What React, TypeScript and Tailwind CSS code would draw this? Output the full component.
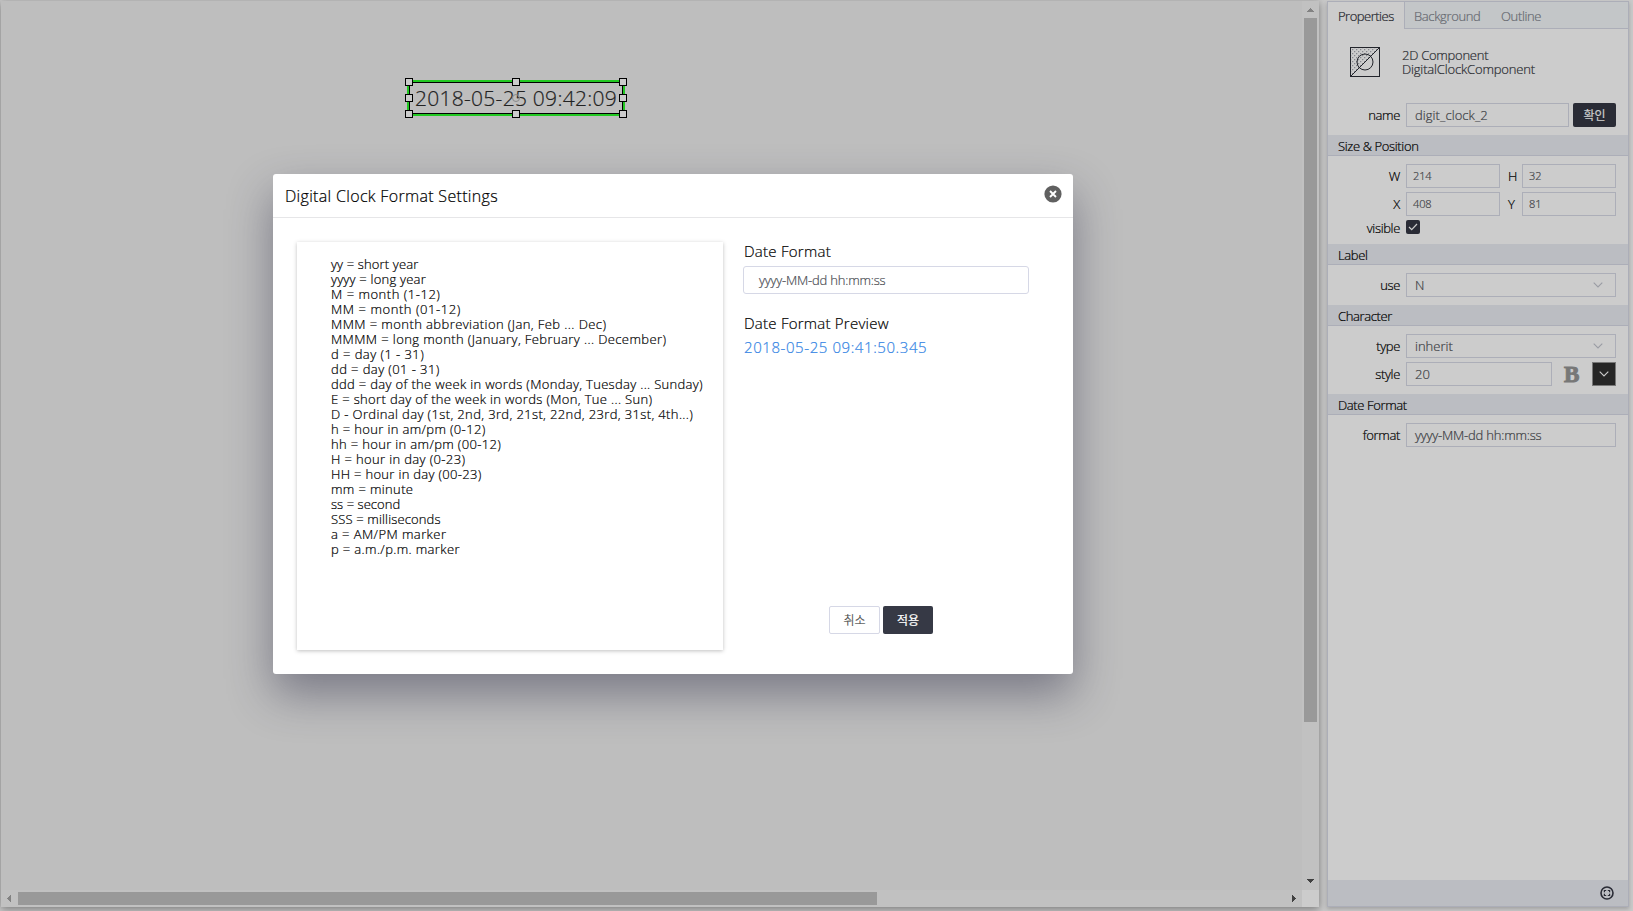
import React from "react";

const lines: { text: string; cls: string }[] = [
  { text: "yy = short year", cls: "tracking-[0.14px]" },
  { text: "yyyy = long year", cls: "tracking-[0.22px]" },
  { text: "M = month (1-12)", cls: "tracking-[0.52px]" },
  { text: "MM = month (01-12)", cls: "tracking-[0.56px]" },
  { text: "MMM = month abbreviation (Jan, Feb ... Dec)", cls: "tracking-[0.42px]" },
  { text: "MMMM = long month (January, February ... December)", cls: "tracking-[0.4px]" },
  { text: "d = day (1 - 31)", cls: "tracking-[0.44px]" },
  { text: "dd = day (01 - 31)", cls: "tracking-[0.41px]" },
  { text: "ddd = day of the week in words (Monday, Tuesday ... Sunday)", cls: "tracking-[0.32px]" },
  { text: "E = short day of the week in words (Mon, Tue ... Sun)", cls: "tracking-[0.34px]" },
  { text: "D - Ordinal day (1st, 2nd, 3rd, 21st, 22nd, 23rd, 31st, 4th...)", cls: "tracking-[0.37px]" },
  { text: "h = hour in am/pm (0-12)", cls: "tracking-[0.35px]" },
  { text: "hh = hour in am/pm (00-12)", cls: "tracking-[0.34px]" },
  { text: "H = hour in day (0-23)", cls: "tracking-[0.36px]" },
  { text: "HH = hour in day (00-23)", cls: "tracking-[0.31px]" },
  { text: "mm = minute", cls: "tracking-[0.36px]" },
  { text: "ss = second", cls: "tracking-[0.05px]" },
  { text: "SSS = milliseconds", cls: "tracking-[0.14px]" },
  { text: "a = AM/PM marker", cls: "tracking-[0.42px]" },
  { text: "p = a.m./p.m. marker", cls: "tracking-[0.36px]" },
];

function Handle({ cls }: { cls: string }) {
  return <span className={`absolute size-2 border border-black bg-[#cccccc] ${cls}`} />;
}

function Section({ children }: { children: React.ReactNode }) {
  return (
    <h3 className="mt-2 flex h-[21px] shrink-0 items-center border-b border-[#acaeb8] bg-[#bbbdc2] pt-[2px] pl-[10px] text-[13px] leading-none tracking-[-0.37px] text-black">
      {children}
    </h3>
  );
}

function Label({ children }: { children: React.ReactNode }) {
  return <span className="w-[72px] shrink-0 text-right text-[13px] leading-none tracking-[-0.35px] text-black">{children}</span>;
}

function Field({ children, cls }: { children: React.ReactNode; cls: string }) {
  return (
    <div className={`flex h-6 items-center border border-[#acaeb8] leading-none text-[#3c3e44] ${cls}`}>
      {children}
    </div>
  );
}

function Chevron({ cls }: { cls: string }) {
  return (
    <svg viewBox="0 0 10 6" className={`h-[6px] w-[10px] ${cls}`} fill="none" stroke="currentColor" strokeWidth="1.1">
      <path d="M0.7 0.7 5 5 9.3 0.7" />
    </svg>
  );
}

function Canvas() {
  return (
    <main className="mt-px ml-px flex h-[906px] w-[1318px] shrink-0 flex-col bg-[#bebebe] shadow-[0_2px_8px_rgba(0,0,0,0.4)]">
      <div className="flex h-[889px]">
        <div className="relative w-[1301px]">
          <div className="absolute top-[79px] left-[406px] flex h-9 w-[218px] items-center justify-center border-2 border-[#22c822]">
            <div className="absolute inset-0 border border-black" />
            <span className="pt-px text-[21px] leading-none tracking-[0.27px] whitespace-nowrap text-[#222]">2018-05-25 09:42:09</span>
            <span className="absolute top-3 left-[103px] size-2 rounded-full border border-[#8a8a8a]" />
            <Handle cls="-top-1 -left-1" />
            <Handle cls="-top-1 left-[103px]" />
            <Handle cls="-top-1 -right-1" />
            <Handle cls="top-3 -left-1" />
            <Handle cls="top-3 -right-1" />
            <Handle cls="-bottom-1 -left-1" />
            <Handle cls="-bottom-1 left-[103px]" />
            <Handle cls="-right-1 -bottom-1" />
          </div>
        </div>
        <div className="flex w-[17px] flex-col items-center bg-[#c1c1c1]">
          <svg viewBox="0 0 7 4" className="mt-[7px] h-1 w-[7px]" fill="#828282"><path d="M3 0h1v1h1v1h1v1h1v1H0V3h1V2h1V1h1z" /></svg>
          <div className="mt-[6px] h-[704px] w-[13px] bg-[#999999]" />
          <svg viewBox="0 0 7 4" className="mt-[157px] h-1 w-[7px]" fill="#404040"><path d="M3 4h1V3h1V2h1V1h1V0H0v1h1v1h1v1h1z" /></svg>
        </div>
      </div>
      <div className="flex h-[17px]">
        <div className="flex w-[1301px] items-center bg-[#c1c1c1]">
          <svg viewBox="0 0 4 7" className="ml-[6px] h-[7px] w-1" fill="#828282"><path d="M0 3v1h1v1h1v1h1v1h1V0H3v1H2v1H1v1z" /></svg>
          <div className="ml-[7px] h-[13px] w-[859px] bg-[#999999]" />
          <svg viewBox="0 0 4 7" className="ml-[415px] h-[7px] w-1" fill="#404040"><path d="M4 3v1H3v1H2v1H1v1H0V0h1v1h1v1h1v1z" /></svg>
        </div>
        <div className="w-[17px] bg-[#cccccc]" />
      </div>
    </main>
  );
}

function Panel() {
  return (
    <aside className="mt-px ml-2 flex h-[906px] w-[302px] shrink-0 flex-col border border-[#acaeb8] bg-[#cccccc] shadow-[0_2px_4px_rgba(0,0,0,0.2)]">
      <nav className="flex h-[27px] shrink-0 bg-[#c3c6c8] text-[13px] leading-none text-[#666970]">
        <span className="flex w-[77px] items-center border-r border-[#acaeb8] bg-[#cccccc] pt-[2px] pl-[10px] tracking-[-0.5px] text-[#22242b]">Properties</span>
        <span className="flex flex-1 items-center border-b border-[#acaeb8] pt-[2px] tracking-[-0.36px]">
          <span className="ml-[9px] w-[87px]">Background</span>
          <span>Outline</span>
        </span>
      </nav>
      <div className="mt-[18px] flex h-[30px] items-center pl-[22px]">
        <svg viewBox="0 0 30 30" className="size-[30px]" fill="none" stroke="#22242b">
          <defs>
            <pattern id="dots" width="4" height="4" patternUnits="userSpaceOnUse">
              <path d="M0 0h1.3v1.3H0zM2 2h1.3v1.3H2z" fill="#85878f" stroke="none" />
            </pattern>
          </defs>
          <path d="M1 1h28L1 29z" fill="url(#dots)" stroke="none" />
          <rect x=".5" y=".5" width="29" height="29" />
          <circle cx="15" cy="15" r="8" />
          <path d="M0.5 29.5 29.5 0.5" />
        </svg>
        <p className="ml-[22px] text-[13px] leading-[14px] text-[#292b30]">
          <span className="tracking-[-0.26px]">2D Component</span>
          <br />
          <span className="tracking-[-0.17px]">DigitalClockComponent</span>
        </p>
      </div>
      <div className="mt-[26px] flex items-center">
        <Label>name</Label>
        <Field cls="ml-[6px] w-[163px] pl-2 text-[13px] tracking-[0.06px]">digit_clock_2</Field>
        <button className="ml-1 h-6 w-[43px] rounded-[2px] bg-[#2a2c36] pt-px text-[12px] leading-none font-normal text-[#cccccc]">확인</button>
      </div>
      <Section>Size &amp; Position</Section>
      <div className="mt-2 flex items-center">
        <Label>W</Label>
        <Field cls="ml-[6px] w-[94px] pb-px pl-[6px] text-[11px] tracking-[-0.1px]">214</Field>
        <span className="w-4 pr-px pl-2 text-[13px] leading-none">H</span>
        <Field cls="ml-[6px] w-[94px] pb-px pl-[6px] text-[11px]">32</Field>
      </div>
      <div className="mt-1 flex items-center">
        <Label>X</Label>
        <Field cls="ml-[6px] w-[94px] pb-px pl-[6px] text-[11px] tracking-[-0.1px]">408</Field>
        <span className="w-4 pl-2 text-[13px] leading-none">Y</span>
        <Field cls="ml-[6px] w-[94px] pb-px pl-[6px] text-[11px]">81</Field>
      </div>
      <div className="mt-1 mb-[2px] flex h-[14px] items-center">
        <span className="flex pt-[2px]"><Label>visible</Label></span>
        <span className="ml-[6px] flex size-[14px] items-center justify-center rounded-[2px] bg-[#2a2c36]">
          <svg viewBox="0 0 10 8" className="h-2 w-[10px]" fill="none" stroke="#cccccc" strokeWidth="1.2"><path d="M1 4 3.7 6.7 9 1" /></svg>
        </span>
      </div>
      <Section>Label</Section>
      <div className="mt-2 flex items-center">
        <Label>use</Label>
        <Field cls="ml-[6px] w-[210px] justify-between pr-3 pl-2 text-[13px]">N<Chevron cls="text-[#9a9ca4]" /></Field>
      </div>
      <Section>Character</Section>
      <div className="mt-2 flex items-center">
        <Label>type</Label>
        <Field cls="ml-[6px] w-[210px] justify-between pr-3 pl-2 text-[13px]">inherit<Chevron cls="text-[#9a9ca4]" /></Field>
      </div>
      <div className="mt-1 flex items-center">
        <Label>style</Label>
        <Field cls="ml-[6px] w-[146px] pl-2 text-[13px]">20</Field>
        <span className="ml-3 w-7 font-['Liberation_Serif',serif] text-[23px] leading-none font-bold text-[#777777] [-webkit-text-stroke:1px_#777777]">B</span>
        <span className="flex size-6 items-center justify-center border border-[#777] bg-[#262626] text-[#ccc]"><Chevron cls="" /></span>
      </div>
      <Section>Date Format</Section>
      <div className="mt-2 flex items-center">
        <Label>format</Label>
        <Field cls="ml-[6px] w-[210px] pl-2 text-[13px] tracking-[-0.2px]">yyyy-MM-dd hh:mm:ss</Field>
      </div>
      <div className="mt-auto flex h-[26px] shrink-0 items-center justify-end bg-[#bbbdc2] pr-[14px]">
        <svg viewBox="0 0 14 14" className="size-[14px]" fill="none" stroke="#2a2c36">
          <circle cx="7" cy="7" r="6" strokeWidth="1.6" />
          <path d="M4.4 6.2V4.5H6.2M7.8 4.5h1.8v1.7M9.6 7.8v1.7H7.8M6.2 9.5H4.4V7.8" strokeWidth="1.2" />
        </svg>
      </div>
    </aside>
  );
}

function Dialog() {
  return (
    <section className="absolute top-[174px] left-[273px] flex h-[500px] w-[800px] flex-col rounded-[3px] bg-white text-black shadow-[0_20px_45px_rgba(45,45,70,0.47)]">
      <header className="flex h-11 shrink-0 items-center justify-between border-b border-[#e6e6e8] pr-[11px] pl-3">
        <h2 className="text-[16px] leading-none tracking-[0.32px]">Digital Clock Format Settings</h2>
        <svg viewBox="0 0 18 18" className="-mt-[3px] size-[18px]">
          <circle cx="9" cy="9" r="8.6" fill="#606060" />
          <path d="M6 6l6 6M12 6l-6 6" stroke="#fff" strokeWidth="1.9" />
        </svg>
      </header>
      <div className="flex flex-1 pt-6 pl-6">
        <div className="h-[408px] w-[426px] bg-white pt-[15px] pl-[34px] shadow-[0_1px_4px_rgba(0,0,0,0.25)]">
          {lines.map((l) => (
            <p key={l.text} className="h-[15px] text-[13px] leading-[15px] whitespace-nowrap"><span className={l.cls}>{l.text}</span></p>
          ))}
        </div>
        <div className="ml-5 flex w-[286px] flex-col">
          <label className="-mt-px h-[25px] pl-px text-[15px] leading-5 tracking-[0.26px]">Date Format</label>
          <div className="flex h-7 items-center rounded-[3px] border border-[#d6d8e6] pl-[15px] text-[13px] leading-none tracking-[-0.2px] text-[#4c4e54]">yyyy-MM-dd hh:mm:ss</div>
          <label className="mt-[19px] pl-px text-[15px] leading-5 tracking-[0.24px]">Date Format Preview</label>
          <p className="mt-1 pl-px text-[15px] leading-5 tracking-[0.58px] text-[#3585e4]">2018-05-25 09:41:50.345</p>
          <div className="mt-[249px] ml-[86px] flex gap-[3px] text-[12px] leading-none">
            <button className="h-7 w-[51px] rounded-[2px] border border-[#d6d8e6] pt-px text-[#444]">취소</button>
            <button className="h-7 w-[50px] rounded-[2px] bg-[#363945] pt-px font-normal text-white">적용</button>
          </div>
        </div>
      </div>
    </section>
  );
}

export default function App() {
  return (
    <div className="relative flex h-[911px] w-[1633px] overflow-hidden bg-[#c9c9c9] font-['Open_Sans','Noto_Sans_CJK_KR',sans-serif] font-light [-webkit-text-stroke:0.2px]">
      <Canvas />
      <Panel />
      <Dialog />
    </div>
  );
}
